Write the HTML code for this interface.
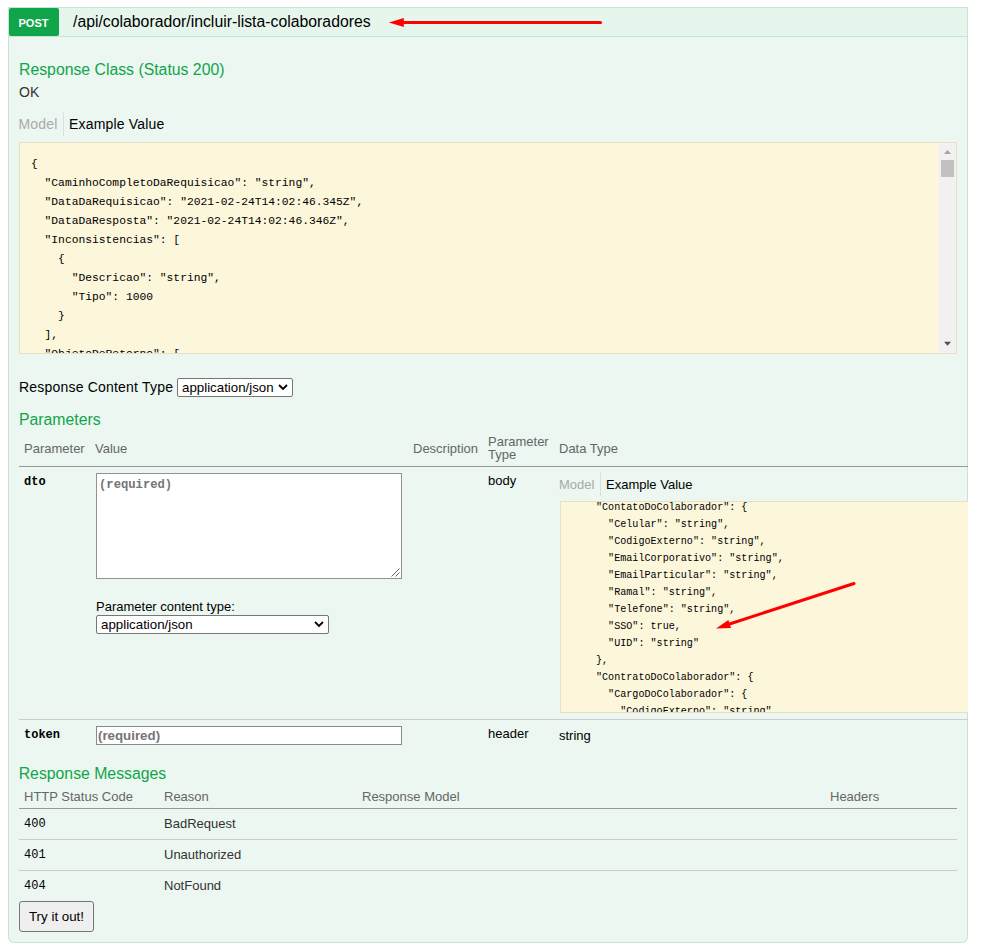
<!DOCTYPE html>
<html lang="pt-BR">
<head>
<meta charset="utf-8">
<title>Swagger UI</title>
<style>
*{box-sizing:border-box;}
html,body{margin:0;padding:0;background:#fff;}
body{width:981px;height:943px;position:relative;overflow:hidden;font-family:"Liberation Sans",Arial,sans-serif;font-size:14px;color:#000;}
#clip{position:absolute;left:0;top:0;width:968px;height:943px;overflow:hidden;}
.abs{position:absolute;white-space:nowrap;}
#heading{position:absolute;left:8px;top:7px;width:960px;height:30px;background:#e7f6ec;border:1px solid #c3e8d1;}
#badge{position:absolute;left:0;top:0;width:50px;height:28px;background:#10a54a;border-radius:2px;color:#fff;font-size:11px;font-weight:bold;text-align:center;line-height:30px;letter-spacing:0;padding-right:1px;}
#path{position:absolute;left:64px;top:5px;font-size:15.8px;line-height:18px;color:#000;white-space:nowrap;}
#content{position:absolute;left:8px;top:37px;width:960px;height:906px;background:#ebf7f0;border:1px solid #c3e8d1;border-top:none;border-radius:0 0 6px 6px;}
.h4{color:#10a54a;font-size:15.8px;line-height:18px;}
.t14{font-size:14px;line-height:16px;}
.gray{color:#aaa;}
.hdr{color:#666;font-size:13px;line-height:15px;}
.snippet{position:absolute;background:#fcf6db;border:1px solid #e5e0c6;overflow:hidden;}
.snippet pre{margin:0;font-family:"Liberation Mono","DejaVu Sans Mono",monospace;font-size:11.3px;line-height:19px;color:#000;white-space:pre;position:absolute;}
.mono{font-family:"Liberation Mono","DejaVu Sans Mono",monospace;}
.hline{position:absolute;height:1px;}
</style>
</head>
<body>
<div id="clip">
<div id="heading">
  <div id="badge">POST</div>
  <div id="path">/api/colaborador/incluir-lista-colaboradores</div>
</div>
<div id="content"></div>

<!-- red arrow 1 -->
<svg class="abs" style="left:380px;top:10px" width="230" height="24" viewBox="0 0 230 24">
  <line x1="22" y1="12.5" x2="220.5" y2="12.5" stroke="#ff0000" stroke-width="3" stroke-linecap="round"/>
  <polygon points="8.9,12.5 23.8,8 23.8,17" fill="#ff0000"/>
</svg>

<div class="abs h4" style="left:19px;top:61px">Response Class (Status 200)</div>
<div class="abs t14" style="left:19px;top:84px;color:#333">OK</div>

<div class="abs t14 gray" style="left:18.5px;top:116px;letter-spacing:0.2px">Model</div>
<div class="abs" style="left:63px;top:112px;width:1px;height:24px;background:#ddd"></div>
<div class="abs t14" style="left:69px;top:116px;letter-spacing:0.18px">Example Value</div>

<div class="snippet" style="left:19px;top:142px;width:938px;height:212px">
<pre style="left:11px;top:12px">{
  "CaminhoCompletoDaRequisicao": "string",
  "DataDaRequisicao": "2021-02-24T14:02:46.345Z",
  "DataDaResposta": "2021-02-24T14:02:46.346Z",
  "Inconsistencias": [
    {
      "Descricao": "string",
      "Tipo": 1000
    }
  ],
  "ObjetoDeRetorno": [
    {</pre>
  <div style="position:absolute;right:0;top:0;width:17px;height:210px;background:#f1f1f1">
    <svg style="position:absolute;left:0;top:0" width="17" height="17" viewBox="0 0 17 17"><polygon points="5,11 8.5,7 12,11" fill="#a3a3a3"/></svg>
    <div style="position:absolute;left:2px;top:17px;width:13px;height:17px;background:#c1c1c1"></div>
    <svg style="position:absolute;left:0;bottom:0" width="17" height="17" viewBox="0 0 17 17"><polygon points="5,5.7 8.5,9.7 12,5.7" fill="#505050"/></svg>
  </div>
</div>

<div class="abs t14" style="left:19px;top:379px;letter-spacing:0.2px">Response Content Type</div>
<div class="abs" style="left:177px;top:378px;width:116px;height:19px;background:#fff;border:1px solid #767676;border-radius:2px;font-size:13.3px;line-height:17px;padding-left:4px">application/json<svg style="position:absolute;right:4px;top:5px" width="10" height="7" viewBox="0 0 10 7"><polyline points="1,1 5,5 9,1" fill="none" stroke="#000" stroke-width="1.8"/></svg></div>

<div class="abs h4" style="left:19px;top:411px">Parameters</div>

<!-- params table header -->
<div class="abs hdr" style="left:24px;top:441px">Parameter</div>
<div class="abs hdr" style="left:95px;top:441px">Value</div>
<div class="abs hdr" style="left:413px;top:441px">Description</div>
<div class="abs hdr" style="left:488px;top:436px;line-height:12.7px;white-space:normal;width:70px">Parameter Type</div>
<div class="abs hdr" style="left:559px;top:441px">Data Type</div>
<div class="hline" style="left:19px;top:466px;width:962px;background:#999"></div>

<!-- dto row -->
<div class="abs mono" style="left:24px;top:475px;font-size:12px;font-weight:bold;line-height:14px">dto</div>
<div class="abs" style="left:96px;top:473px;width:306px;height:106px;background:#fff;border:1px solid #929292">
  <div class="abs mono" style="left:2px;top:4px;font-size:12.2px;line-height:14px;color:#757575;font-weight:bold">(required)</div>
  <svg style="position:absolute;right:1px;bottom:1px" width="10" height="10" viewBox="0 0 10 10"><path d="M9.5,1.5 L1.5,9.5 M9.5,5.5 L5.5,9.5" stroke="#666" stroke-width="1" fill="none"/></svg>
</div>
<div class="abs" style="left:96px;top:600px;font-size:13px;line-height:14px">Parameter content type:</div>
<div class="abs" style="left:96px;top:615px;width:233px;height:19px;background:#fff;border:1px solid #767676;border-radius:2px;font-size:13.3px;line-height:17px;padding-left:4px">application/json<svg style="position:absolute;right:4px;top:5px" width="10" height="7" viewBox="0 0 10 7"><polyline points="1,1 5,5 9,1" fill="none" stroke="#000" stroke-width="1.8"/></svg></div>

<div class="abs" style="left:488px;top:473px;font-size:13px;line-height:15px">body</div>

<div class="abs gray" style="left:559px;top:477px;font-size:13px;line-height:15px">Model</div>
<div class="abs" style="left:600px;top:472px;width:1px;height:24px;background:#ddd"></div>
<div class="abs" style="left:606px;top:477px;font-size:13px;line-height:15px">Example Value</div>

<div class="snippet" style="left:560px;top:501px;width:420px;height:212px">
<pre style="left:35px;top:-3px;font-size:10.1px;line-height:17px">"ContatoDoColaborador": {
  "Celular": "string",
  "CodigoExterno": "string",
  "EmailCorporativo": "string",
  "EmailParticular": "string",
  "Ramal": "string",
  "Telefone": "string",
  "SSO": true,
  "UID": "string"
},
"ContratoDoColaborador": {
  "CargoDoColaborador": {
    "CodigoExterno": "string",</pre>
</div>

<!-- red arrow 2 -->
<svg class="abs" style="left:700px;top:570px" width="170" height="70" viewBox="0 0 170 70">
  <line x1="154" y1="13.5" x2="28" y2="54.5" stroke="#ff0000" stroke-width="3" stroke-linecap="round"/>
  <polygon points="16.1,58.6 28.4,50 31,58" fill="#ff0000"/>
</svg>

<div class="hline" style="left:19px;top:719px;width:962px;background:#ccc"></div>

<!-- token row -->
<div class="abs mono" style="left:24px;top:727.6px;font-size:12px;font-weight:bold;line-height:14px">token</div>
<div class="abs" style="left:96px;top:726px;width:306px;height:19px;background:#fff;border:1px solid #8a8a8a">
  <div class="abs" style="left:1px;top:1px;font-size:13.3px;line-height:15px;color:#757575;font-weight:bold">(required)</div>
</div>
<div class="abs" style="left:488px;top:726px;font-size:13px;line-height:15px">header</div>
<div class="abs" style="left:559px;top:728px;font-size:13px;line-height:15px">string</div>

<div class="abs h4" style="left:18.7px;top:765px">Response Messages</div>
<div class="abs hdr" style="left:24px;top:789px">HTTP Status Code</div>
<div class="abs hdr" style="left:164px;top:789px">Reason</div>
<div class="abs hdr" style="left:362px;top:789px">Response Model</div>
<div class="abs hdr" style="left:830px;top:789px">Headers</div>
<div class="hline" style="left:19px;top:808px;width:938px;background:#999"></div>

<div class="abs mono" style="left:24px;top:816.5px;font-size:12px;line-height:14px">400</div>
<div class="abs" style="left:164px;top:816px;color:#333;font-size:13px;line-height:15px">BadRequest</div>
<div class="hline" style="left:19px;top:839px;width:938px;background:#ccc"></div>
<div class="abs mono" style="left:24px;top:847.5px;font-size:12px;line-height:14px">401</div>
<div class="abs" style="left:164px;top:847px;color:#333;font-size:13px;line-height:15px">Unauthorized</div>
<div class="hline" style="left:19px;top:870px;width:938px;background:#ccc"></div>
<div class="abs mono" style="left:24px;top:878.5px;font-size:12px;line-height:14px">404</div>
<div class="abs" style="left:164px;top:878px;color:#333;font-size:13px;line-height:15px">NotFound</div>

<div class="abs" style="left:19px;top:901px;width:75px;height:31px;background:#efefef;border:1px solid #767676;border-radius:3px;font-size:13.33px;line-height:29px;text-align:center">Try it out!</div>
</div>
</body>
</html>
